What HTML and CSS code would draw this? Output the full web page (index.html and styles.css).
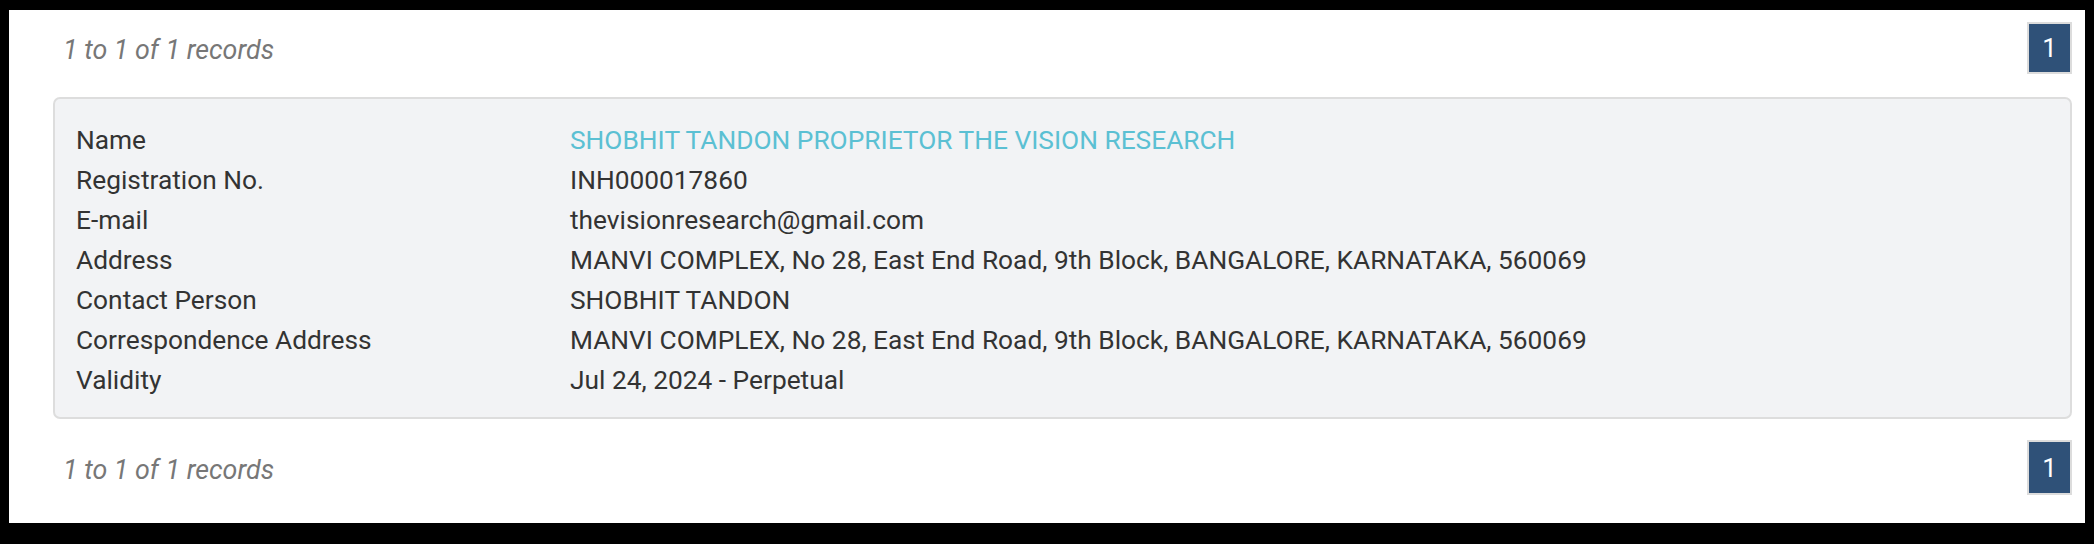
FILE: index.html
```html
<!DOCTYPE html>
<html>
<head>
<meta charset="utf-8">
<link rel="stylesheet" href="styles.css">
</head>
<body>
<div class="page">
  <div class="pager">
    <span class="records">1 to 1 of 1 records</span>
    <span class="pagebtn">1</span>
  </div>
  <div class="card">
    <div class="label">Name</div><div class="value name">SHOBHIT TANDON PROPRIETOR THE VISION RESEARCH</div>
    <div class="label">Registration No.</div><div class="value">INH000017860</div>
    <div class="label">E-mail</div><div class="value">thevisionresearch@gmail.com</div>
    <div class="label">Address</div><div class="value">MANVI COMPLEX, No 28, East End Road, 9th Block, BANGALORE, KARNATAKA, 560069</div>
    <div class="label">Contact Person</div><div class="value">SHOBHIT TANDON</div>
    <div class="label">Correspondence Address</div><div class="value">MANVI COMPLEX, No 28, East End Road, 9th Block, BANGALORE, KARNATAKA, 560069</div>
    <div class="label">Validity</div><div class="value">Jul 24, 2024 - Perpetual</div>
  </div>
  <div class="pager bottom">
    <span class="records">1 to 1 of 1 records</span>
    <span class="pagebtn">1</span>
  </div>
</div>
</body>
</html>
```
FILE: styles.css
```css
html, body {
  margin: 0;
  padding: 0;
  background: #000;
}
body {
  width: 2094px;
  height: 544px;
  padding: 10px 9px 21px 9px;
  box-sizing: border-box;
  font-family: Roboto, "Liberation Sans", sans-serif;
}
.page {
  background: #fff;
  height: 100%;
  box-sizing: border-box;
  padding: 12px 13px 0 44px;
}
.pager {
  display: flex;
  align-items: center;
  justify-content: space-between;
  height: 52px;
}
.pager.bottom {
  margin-top: 21px;
  height: 55px;
}
.records {
  font-style: italic;
  color: #777;
  font-size: 26.8px;
  padding-left: 10px;
  padding-top: 4px;
}
.pagebtn {
  box-sizing: border-box;
  width: 45px;
  height: 100%;
  background: #2f5178;
  border: 2px solid #dcdcdc;
  color: #fff;
  font-size: 26px;
  display: flex;
  align-items: center;
  justify-content: center;
}
.card {
  margin-top: 23px;
  background: #f2f3f5;
  border: 2px solid #dddddd;
  border-radius: 7px;
  padding: 21px 21px 17px 21px;
  display: grid;
  grid-template-columns: 494px 1fr;
  font-size: 26.3px;
  line-height: 40px;
  color: #333;
}
.value.name {
  color: #5bc0d3;
}
```
